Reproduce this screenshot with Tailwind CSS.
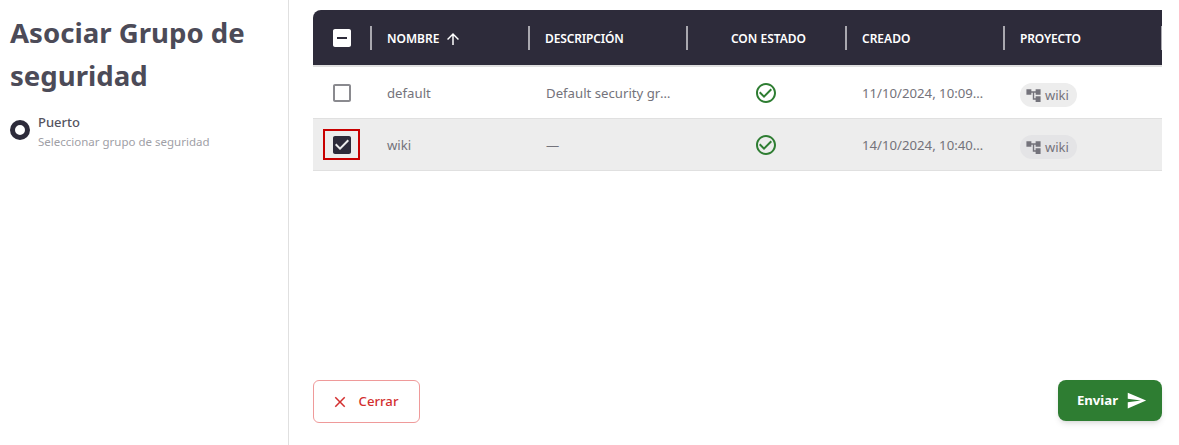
<!DOCTYPE html>
<html lang="es">
<head>
    <meta charset="UTF-8">
    <title>Asociar Grupo de seguridad</title>
    <script src="https://cdn.jsdelivr.net/npm/@tailwindcss/browser@4"></script>
</head>
<body class="bg-white font-['Noto_Sans',sans-serif]">
    <div class="flex h-[445px] w-[1179px] overflow-hidden">
        <!-- steps -->
        <aside class="w-[289px] shrink-0 border-r border-[#e0e0e0] pl-[10px] pt-[11px]">
            <h1 class="w-[270px] text-[27.6px] leading-[43px] font-bold text-[#4c4b58]">Asociar Grupo de seguridad</h1>
            <div class="mt-[16px] flex gap-2">
                <span class="mt-[7px] block size-5 rounded-full border-[5px] border-[#2d2b3a]"></span>
                <div>
                    <p class="text-[13px] leading-[18px] font-medium text-[#55545f]">Puerto</p>
                    <p class="mt-[2px] text-[11.5px] leading-[18px] text-[#a0a0a6]">Seleccionar grupo de seguridad</p>
                </div>
            </div>
        </aside>

        <main class="flex w-[890px] min-w-0 flex-col pt-[10px] pr-[17px] pl-[24px] pb-[22px]">
            <!-- header -->
            <div class="grid h-[55px] w-[849px] grid-cols-[59px_158px_158px_159px_158px_158px] items-center overflow-hidden rounded-tl-lg bg-[#2d2b3a] text-[12px] font-semibold text-white">
                <div class="relative flex h-full items-center pl-[17px]">
                    <svg class="size-6" viewBox="0 0 24 24" fill="#fff"><path d="M19 3H5c-1.1 0-2 .9-2 2v14c0 1.1.9 2 2 2h14c1.1 0 2-.9 2-2V5c0-1.1-.9-2-2-2zm-2 10H7v-2h10v2z"/></svg>
                    <span class="absolute top-4 right-0 h-6 w-0.5 bg-[#a9a8af]"></span>
                </div>
                <div class="relative flex h-full items-center gap-[5px] pt-[2px] pl-[15px]">
                    NOMBRE
                    <svg class="size-[18px]" viewBox="0 0 24 24" fill="#fff"><path d="M4 12l1.41 1.41L11 7.83V20h2V7.83l5.58 5.59L20 12l-8-8-8 8z"/></svg>
                    <span class="absolute top-4 right-0 h-6 w-0.5 bg-[#a9a8af]"></span>
                </div>
                <div class="relative flex h-full items-center pt-[2px] pl-[15px] tracking-[-0.15px]">
                    DESCRIPCIÓN
                    <span class="absolute top-4 right-0 h-6 w-0.5 bg-[#a9a8af]"></span>
                </div>
                <div class="relative flex h-full items-center justify-center pt-[2px] pl-[2px]">
                    CON ESTADO
                    <span class="absolute top-4 right-0 h-6 w-0.5 bg-[#a9a8af]"></span>
                </div>
                <div class="relative flex h-full items-center pt-[2px] pl-[15px]">
                    CREADO
                    <span class="absolute top-4 right-0 h-6 w-0.5 bg-[#a9a8af]"></span>
                </div>
                <div class="relative flex h-full items-center pt-[2px] pl-[15px] tracking-[-0.15px]">
                    PROYECTO
                    <span class="absolute top-4 right-0 h-6 w-0.5 bg-[#a9a8af]"></span>
                </div>
            </div>

            <!-- rows -->
            <div class="grid h-[54px] w-[849px] grid-cols-[59px_158px_158px_159px_158px_157px] items-center border-t-2 border-b border-t-[#e0e0e0] border-b-[#e0e0e0] text-[13.2px] text-[#74737b]">
                <div class="flex pl-[17px]">
                    <svg class="size-6" viewBox="0 0 24 24" fill="#8a8a8f"><path d="M19 5v14H5V5h14m0-2H5c-1.1 0-2 .9-2 2v14c0 1.1.9 2 2 2h14c1.1 0 2-.9 2-2V5c0-1.1-.9-2-2-2z"/></svg>
                </div>
                <div class="pt-[2px] pl-[15px]">default</div>
                <div class="truncate pt-[2px] pr-[13px] pl-[16px]">Default security group</div>
                <div class="flex justify-center pr-[4px]">
                    <svg class="size-6" viewBox="0 0 24 24" fill="#2e7d32"><path d="M16.59 7.58 10 14.17l-3.59-3.58L5 12l5 5 8-8zM12 2C6.48 2 2 6.48 2 12s4.48 10 10 10 10-4.48 10-10S17.52 2 12 2zm0 18c-4.42 0-8-3.58-8-8s3.58-8 8-8 8 3.58 8 8-3.58 8-8 8z"/></svg>
                </div>
                <div class="truncate pt-[2px] pr-[20px] pl-[15px]">11/10/2024, 10:09:21</div>
                <div class="pt-[8px] pl-[15px]">
                    <span class="inline-flex h-6 items-center gap-[3px] rounded-full bg-[#ededed] pr-[8px] pl-[5px] text-[13px]">
                        <svg class="size-[17px]" viewBox="0 0 24 24" fill="#74737b"><path d="M22 11V3h-7v3H9V3H2v8h7V8h2v10h4v3h7v-8h-7v3h-2V8h2v3z"/></svg>
                        wiki
                    </span>
                </div>
            </div>
            <div class="grid h-[52px] w-[849px] grid-cols-[59px_158px_158px_159px_158px_157px] items-center border-b border-[#e0e0e0] bg-[#ededed] text-[13.2px] text-[#74737b]">
                <div class="flex pl-[10px]">
                    <div class="flex h-[31px] w-[37px] items-center justify-center border-2 border-[#c80000]">
                        <svg class="size-6" viewBox="0 0 24 24" fill="#2d2b3a"><path d="M19 3H5c-1.11 0-2 .9-2 2v14c0 1.1.89 2 2 2h14c1.11 0 2-.9 2-2V5c0-1.1-.89-2-2-2zm-9 14l-5-5 1.41-1.41L10 14.17l7.59-7.59L19 8l-9 9z"/></svg>
                    </div>
                </div>
                <div class="pt-[2px] pl-[15px]">wiki</div>
                <div class="pt-[2px] pl-[16px]">—</div>
                <div class="flex justify-center pr-[4px]">
                    <svg class="size-6" viewBox="0 0 24 24" fill="#2e7d32"><path d="M16.59 7.58 10 14.17l-3.59-3.58L5 12l5 5 8-8zM12 2C6.48 2 2 6.48 2 12s4.48 10 10 10 10-4.48 10-10S17.52 2 12 2zm0 18c-4.42 0-8-3.58-8-8s3.58-8 8-8 8 3.58 8 8-3.58 8-8 8z"/></svg>
                </div>
                <div class="truncate pt-[2px] pr-[20px] pl-[15px]">14/10/2024, 10:40:05</div>
                <div class="pt-[8px] pl-[15px]">
                    <span class="inline-flex h-6 items-center gap-[3px] rounded-full bg-[#e4e4e6] pr-[8px] pl-[5px] text-[13px]">
                        <svg class="size-[17px]" viewBox="0 0 24 24" fill="#74737b"><path d="M22 11V3h-7v3H9V3H2v8h7V8h2v10h4v3h7v-8h-7v3h-2V8h2v3z"/></svg>
                        wiki
                    </span>
                </div>
            </div>

            <!-- footer -->
            <div class="mt-auto flex w-[849px] items-start justify-between">
                <button class="flex h-[43px] w-[107px] items-center justify-center gap-[10px] rounded-md border border-[#ef9a9a] pr-[4px] text-[13.2px] font-medium text-[#d32f2f]">
                    <svg class="size-[18px]" viewBox="0 0 24 24" fill="#d32f2f"><path d="M19 6.41 17.59 5 12 10.59 6.41 5 5 6.41 10.59 12 5 17.59 6.41 19 12 13.41 17.59 19 19 17.59 13.41 12z"/></svg>
                    Cerrar
                </button>
                <button class="flex h-[41px] w-[104px] items-center justify-center gap-[8px] rounded-lg bg-[#2e7d32] pl-[4px] text-[13.2px] font-bold text-white shadow-md">
                    Enviar
                    <svg class="size-[21px]" viewBox="0 0 24 24" fill="#fff"><path d="M2.01 21 23 12 2.01 3 2 10l15 2-15 2z"/></svg>
                </button>
            </div>
        </main>
    </div>
</body>
</html>
